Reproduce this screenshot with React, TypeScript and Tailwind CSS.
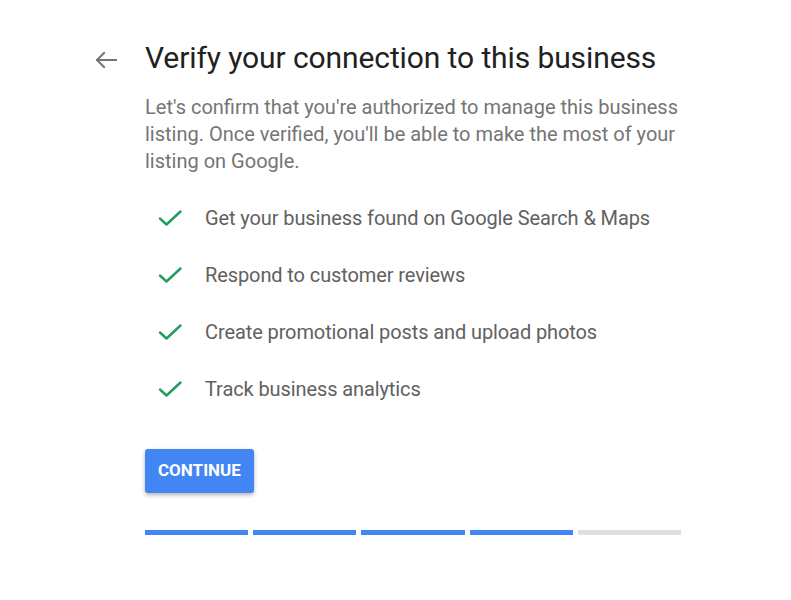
import React from "react";

const items = [
  "Get your business found on Google Search & Maps",
  "Respond to customer reviews",
  "Create promotional posts and upload photos",
  "Track business analytics",
];

const steps = [true, true, true, true, false];

const BackArrow = () => (
  <svg width="24" height="18" viewBox="0 0 24 18" fill="none" stroke="#757575" strokeWidth="2" strokeLinecap="square">
    <path d="M3 9H22" />
    <path d="M10 2L3 9L10 16" />
  </svg>
);

const Check = () => (
  <svg width="24" height="16" viewBox="0 0 24 16" fill="none" stroke="#1e9e5a" strokeWidth="2.4" strokeLinecap="round" strokeLinejoin="round">
    <path d="M2 8.5L8.5 14.5L22.5 1.5" />
  </svg>
);

export default function App() {
  return (
    <div className="w-[791px] h-[600px] bg-white font-['Roboto','Liberation_Sans',sans-serif]">
      <div className="flex pt-[40px] pl-[94px]">
        {/* back */}
        <div className="w-[51px] h-[36px] mt-[2px] flex items-center">
          <BackArrow />
        </div>

        <div className="w-[536px]">
          <h1 className="text-[30px] leading-[36px] tracking-[-0.1px] text-[#212121] font-normal">
            Verify your connection to this business
          </h1>
          <p className="mt-[18px] text-[20px] leading-[27px] text-[#757575]">
            Let's confirm that you're authorized to manage this business listing. Once verified, you'll be able to make
            the most of your listing on Google.
          </p>

          <ul className="mt-[14px]">
            {items.map((t) => (
              <li key={t} className="h-[57px] flex items-center">
                <div className="w-[60px] pl-[13px] flex items-center">
                  <Check />
                </div>
                <span className="text-[20px] tracking-[-0.1px] text-[#616161]">{t}</span>
              </li>
            ))}
          </ul>

          <button className="mt-[32px] h-[44px] px-[13px] rounded-[3px] bg-[#4285f4] text-white text-[17px] font-bold uppercase shadow-[0_2px_4px_rgba(0,0,0,0.3)]">
            Continue
          </button>

          <div className="mt-[37px] flex gap-[5px]">
            {steps.map((on, i) => (
              <div key={i} className={on ? "flex-1 h-[5px] bg-[#4285f4]" : "flex-1 h-[5px] bg-[#e0e0e0]"} />
            ))}
          </div>
        </div>
      </div>
    </div>
  );
}
